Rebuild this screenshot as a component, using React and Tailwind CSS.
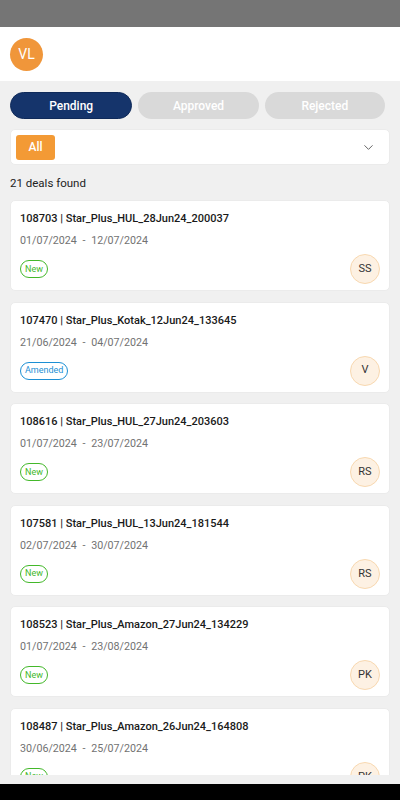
import { ChevronDown } from "lucide-react";

const deals = [
  { id: "108703", name: "Star_Plus_HUL_28Jun24_200037", from: "01/07/2024", to: "12/07/2024", status: "New", user: "SS" },
  { id: "107470", name: "Star_Plus_Kotak_12Jun24_133645", from: "21/06/2024", to: "04/07/2024", status: "Amended", user: "V" },
  { id: "108616", name: "Star_Plus_HUL_27Jun24_203603", from: "01/07/2024", to: "23/07/2024", status: "New", user: "RS" },
  { id: "107581", name: "Star_Plus_HUL_13Jun24_181544", from: "02/07/2024", to: "30/07/2024", status: "New", user: "RS" },
  { id: "108523", name: "Star_Plus_Amazon_27Jun24_134229", from: "01/07/2024", to: "23/08/2024", status: "New", user: "PK" },
  { id: "108487", name: "Star_Plus_Amazon_26Jun24_164808", from: "30/06/2024", to: "25/07/2024", status: "New", user: "PK" },
];

function StatusBadge({ status }) {
  if (status === "Amended") {
    return (
      <span className="h-[18px] px-[4px] flex items-center rounded-full border border-[#1c8fd4] text-[#1c8fd4] text-[9px] leading-none">
        Amended
      </span>
    );
  }
  return (
    <span className="h-[18px] px-[4px] flex items-center rounded-full border border-[#43b82a] text-[#43b82a] text-[9px] leading-none">
      New
    </span>
  );
}

function DealCard({ deal }) {
  return (
    <div className="bg-white rounded-[5px] border border-[#ebebeb] h-[91px] shrink-0 px-[9px] pt-[11px] flex flex-col">
      <div className="text-[11px] leading-[14px] font-medium text-[#1a1a1a]">
        {deal.id} | {deal.name}
      </div>
      <div className="mt-[8px] text-[10.7px] leading-[14px] text-[#727272]">
        {deal.from} <span className="mx-[3px]">-</span> {deal.to}
      </div>
      <div className="mt-[6px] flex items-center justify-between">
        <StatusBadge status={deal.status} />
        <div className="w-[30px] h-[30px] rounded-full bg-[#fdf1e3] border border-[#f8d8b0] flex items-center justify-center text-[11px] text-[#333]">
          {deal.user}
        </div>
      </div>
    </div>
  );
}

export default function App() {
  return (
    <div className="w-[400px] h-[800px] flex flex-col bg-[#f0f0f0] overflow-hidden" style={{ fontFamily: "Roboto, 'Noto Sans', sans-serif" }}>
      {/* status bar */}
      <div className="h-[27px] bg-[#757575] shrink-0" />

      {/* header */}
      <div className="h-[54px] bg-white shrink-0 flex items-center px-[10px]">
        <div className="w-[33px] h-[33px] rounded-full bg-[#f0963a] flex items-center justify-center text-white text-[14px]">
          VL
        </div>
      </div>

      {/* tabs */}
      <div className="flex gap-[6px] pl-[10px] pr-[15px] pt-[11px] shrink-0">
        <div className="flex-1 h-[27px] rounded-full bg-[#15346b] border border-[#0f2a5a] flex items-center justify-center text-white text-[12px] font-medium">
          Pending
        </div>
        <div className="flex-1 h-[27px] rounded-full bg-[#d9d9d9] flex items-center justify-center text-white text-[12px] font-medium">
          Approved
        </div>
        <div className="flex-1 h-[27px] rounded-full bg-[#d9d9d9] flex items-center justify-center text-white text-[12px] font-medium">
          Rejected
        </div>
      </div>

      {/* filter */}
      <div className="mx-[10px] mt-[10px] h-[36px] bg-white rounded-[5px] border border-[#ebebeb] flex items-center justify-between pl-[5px] pr-[13px] shrink-0">
        <div className="w-[39px] h-[25px] rounded-[3px] bg-[#f39a35] flex items-center justify-center text-white text-[12px] font-medium">
          All
        </div>
        <ChevronDown size={15} strokeWidth={1.6} className="text-[#666]" />
      </div>

      <div className="px-[10px] mt-[11px] text-[11.5px] leading-[14px] text-[#222] shrink-0">21 deals found</div>

      {/* list */}
      <div className="flex-1 overflow-hidden mt-[10px] mb-[9px] px-[10px] flex flex-col gap-[10.6px]">
        {deals.map((d) => (
          <DealCard key={d.id} deal={d} />
        ))}
      </div>

      {/* nav bar */}
      <div className="h-[16px] bg-black shrink-0" />
    </div>
  );
}
